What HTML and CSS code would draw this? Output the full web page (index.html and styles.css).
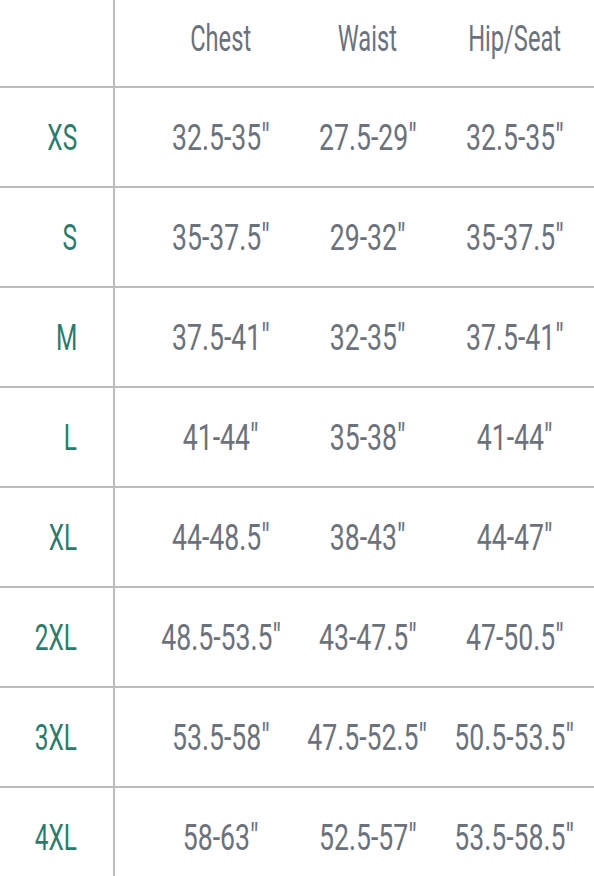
FILE: index.html
```html
<!DOCTYPE html>
<html>
<head>
<meta charset="utf-8">
<link rel="stylesheet" href="styles.css">
</head>
<body>
<div class="chart">
  <div class="row head">
    <div class="cell size"></div>
    <div class="cell c1"><span class="t">Chest</span></div>
    <div class="cell c2"><span class="t">Waist</span></div>
    <div class="cell c3"><span class="t">Hip/Seat</span></div>
  </div>
  <div class="row">
    <div class="cell size"><span class="t">XS</span></div>
    <div class="cell c1"><span class="t">32.5-35"</span></div>
    <div class="cell c2"><span class="t">27.5-29"</span></div>
    <div class="cell c3"><span class="t">32.5-35"</span></div>
  </div>
  <div class="row">
    <div class="cell size"><span class="t">S</span></div>
    <div class="cell c1"><span class="t">35-37.5"</span></div>
    <div class="cell c2"><span class="t">29-32"</span></div>
    <div class="cell c3"><span class="t">35-37.5"</span></div>
  </div>
  <div class="row">
    <div class="cell size"><span class="t">M</span></div>
    <div class="cell c1"><span class="t">37.5-41"</span></div>
    <div class="cell c2"><span class="t">32-35"</span></div>
    <div class="cell c3"><span class="t">37.5-41"</span></div>
  </div>
  <div class="row">
    <div class="cell size"><span class="t">L</span></div>
    <div class="cell c1"><span class="t">41-44"</span></div>
    <div class="cell c2"><span class="t">35-38"</span></div>
    <div class="cell c3"><span class="t">41-44"</span></div>
  </div>
  <div class="row">
    <div class="cell size"><span class="t">XL</span></div>
    <div class="cell c1"><span class="t">44-48.5"</span></div>
    <div class="cell c2"><span class="t">38-43"</span></div>
    <div class="cell c3"><span class="t">44-47"</span></div>
  </div>
  <div class="row">
    <div class="cell size"><span class="t">2XL</span></div>
    <div class="cell c1"><span class="t">48.5-53.5"</span></div>
    <div class="cell c2"><span class="t">43-47.5"</span></div>
    <div class="cell c3"><span class="t">47-50.5"</span></div>
  </div>
  <div class="row">
    <div class="cell size"><span class="t">3XL</span></div>
    <div class="cell c1"><span class="t">53.5-58"</span></div>
    <div class="cell c2"><span class="t">47.5-52.5"</span></div>
    <div class="cell c3"><span class="t">50.5-53.5"</span></div>
  </div>
  <div class="row last">
    <div class="cell size"><span class="t">4XL</span></div>
    <div class="cell c1"><span class="t">58-63"</span></div>
    <div class="cell c2"><span class="t">52.5-57"</span></div>
    <div class="cell c3"><span class="t">53.5-58.5"</span></div>
  </div>
</div>
</body>
</html>
```
FILE: styles.css
```css
html, body {
  margin: 0;
  padding: 0;
  background: #ffffff;
}
.chart {
  width: 594px;
  height: 876px;
  overflow: hidden;
  font-family: Roboto, "Liberation Sans", sans-serif;
  font-weight: 400;
  font-size: 37px;
  color: #6c727b;
}
.row {
  display: grid;
  grid-template-columns: 113px 2px 179px 147px 153px;
  height: 98px;
  border-bottom: 2px solid #bcbcbc;
}
.row.head {
  height: 86px;
}
.row.last {
  border-bottom: none;
}
.cell {
  display: flex;
  align-items: center;
  justify-content: center;
  white-space: nowrap;
}
.cell.size {
  grid-column: 1;
  justify-content: flex-end;
  padding-right: 36px;
  color: #2b7b6d;
  border-right: 2px solid #bcbcbc;
  grid-column-end: 3;
}
.cell.c1 {
  padding-left: 33px;
}
.cell.c3 {
  padding-right: 6px;
}
.head .cell {
  padding-bottom: 10px;
}
.t {
  display: inline-block;
  transform: scaleX(0.72);
}
.head .t {
  transform: scaleX(0.64);
}
.size .t {
  transform: scaleX(0.66);
  transform-origin: right center;
}
```
